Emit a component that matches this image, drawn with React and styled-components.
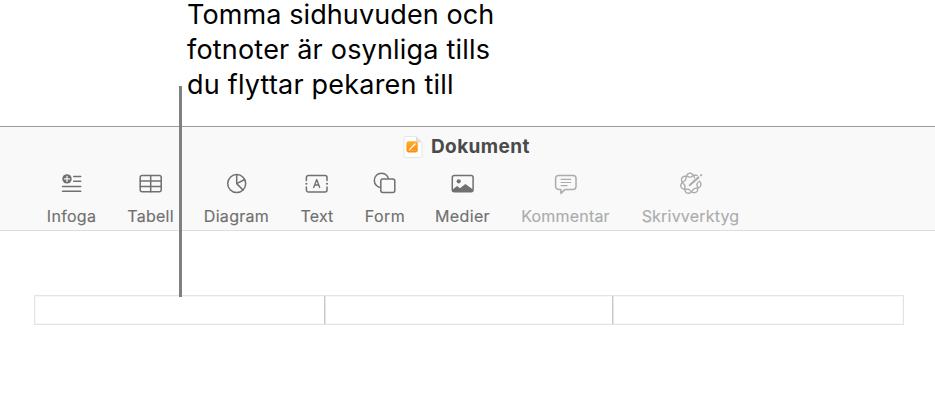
import React from "react";
import styled, { createGlobalStyle } from "styled-components";

const GlobalStyle = createGlobalStyle`
  * { box-sizing: border-box; }
  body { margin: 0; background: #fff; font-family: Inter, "Liberation Sans", sans-serif; }
`;

const Page = styled.main`
  position: relative;
  display: flow-root;
  width: 935px;
  height: 414px;
  overflow: hidden;
  background: #fff;
`;

const Callout = styled.div`
  height: 128px;
  margin: -2px 0 0;
  padding-left: 187px;
  color: #000;
  font-size: 27px;
  line-height: 34.75px;
`;

const CalloutLine = styled.span`
  display: block;
  white-space: nowrap;
  letter-spacing: ${(p) => p.$tracking}px;
`;

const Leader = styled.div`
  position: absolute;
  left: 179px;
  top: 86px;
  width: 3px;
  height: 211px;
  background: #808080;
`;

const Header = styled.header`
  height: 105px;
  background: #f9f9f9;
  border-top: 1px solid #999;
  border-bottom: 1px solid #dedede;
`;

const TitleBar = styled.div`
  display: flex;
  align-items: center;
  height: 40px;
  padding-left: 403px;
  gap: 8px;
`;

const Title = styled.h1`
  margin: 0;
  color: #4a4a4a;
  font-size: 19px;
  font-weight: 700;
  line-height: 24px;
  letter-spacing: 0.4px;
`;

const Toolbar = styled.nav`
  display: flex;
  gap: 32px;
  padding: 4px 0 0 47px;
`;

const ToolButton = styled.button`
  display: flex;
  flex-direction: column;
  align-items: center;
  gap: 9px;
  width: ${(p) => p.$width}px;
  padding: 0;
  border: 0;
  background: none;
  font-family: inherit;
  color: ${(p) => (p.disabled ? "#acacac" : "#707070")};
`;

const ToolLabel = styled.span`
  font-size: 16px;
  font-weight: 400;
  line-height: 20px;
  white-space: nowrap;
  letter-spacing: ${(p) => p.$tracking}px;
  -webkit-text-stroke: 0.15px currentColor;
`;

const Glyph = styled.svg`
  display: block;
  width: 26px;
  height: 26px;
  fill: none;
  stroke: currentColor;
  stroke-width: 1.5;
  stroke-linecap: round;
  stroke-linejoin: round;
`;

const HeaderFields = styled.section`
  display: grid;
  grid-template-columns: 290px 288px 290px;
  width: 870px;
  height: 30px;
  margin: 64px 0 0 34px;
  border: 1px solid #e2e4e5;
  box-shadow: inset 0 0 0 1px #f6f7f7;
`;

const Field = styled.div`
  border-right: ${(p) => (p.$last ? "0" : "1px solid #c6cbce")};
  box-shadow: ${(p) => (p.$last ? "none" : "1px 0 0 #e4e7e9")};
`;

const DocSvg = styled.svg`
  display: block;
  width: 20px;
  height: 24px;
`;

function DocumentIcon() {
  return (
    <DocSvg viewBox="0 0 20 24">
      <defs>
        <linearGradient id="orange" x1="0" y1="0" x2="0" y2="1">
          <stop offset="0" stopColor="#ffae2b" />
          <stop offset="1" stopColor="#fb8b0c" />
        </linearGradient>
      </defs>
      <path d="M2 1.5h11l6 6v13.5a1.5 1.5 0 0 1-1.5 1.5h-15A1.5 1.5 0 0 1 1 21V3a1.5 1.5 0 0 1 1-1.5z" fill="#fff" stroke="#e6e6e6" strokeWidth="1" />
      <path d="M13 1.5V6a1.5 1.5 0 0 0 1.5 1.5H19z" fill="#dcdcdc" />
      <rect x="3.4" y="6.2" width="11.4" height="11.2" rx="2.3" fill="url(#orange)" />
      <path d="M6.4 14.6l5.7-5.6" stroke="#fff" strokeWidth="1.3" strokeLinecap="round" />
      <path d="M6 15.4h6.5" stroke="#ffd08b" strokeWidth=".5" />
    </DocSvg>
  );
}

function rosette(cx, cy, radius, depth) {
  const pts = [];
  for (let i = 0; i <= 280; i++) {
    const t = (i / 280) * Math.PI * 4;
    const r = radius + depth * Math.cos(3.5 * (t + 0.1));
    pts.push(`${(cx + r * Math.sin(t)).toFixed(2)} ${(cy - r * Math.cos(t)).toFixed(2)}`);
  }
  return `M${pts.join("L")}`;
}

const glyphs = {
  insert: (
    <>
      <circle cx="8.3" cy="8.5" r="4.7" fill="currentColor" stroke="none" />
      <path d="M8.3 6v5M5.8 8.5h5" stroke="#f9f9f9" strokeWidth="1.2" />
      <path d="M15 6h7M15 10.9h7M3.8 16h18.2M3.8 20.8h18.2" strokeWidth="1.5" />
    </>
  ),
  table: (
    <>
      <rect x="2.5" y="5.2" width="21" height="16.2" rx="2" />
      <path d="M2.5 10.6h21M2.5 16h21M13 5.2v16.2" />
    </>
  ),
  chart: (
    <>
      <circle cx="13" cy="13.2" r="9" />
      <path d="M13 4.3v8.9l6.3 6.4M13 13.2l8-4.1" />
    </>
  ),
  text: (
    <>
      <path d="M2.7 10V7a2 2 0 0 1 2-2h16.6a2 2 0 0 1 2 2v3M2.7 16.7v2.9a2 2 0 0 0 2 2h16.6a2 2 0 0 0 2-2v-2.9" />
      <path d="M2.7 13.3h.02M23.3 13.3h.02" strokeWidth="2.1" />
      <path d="M10 17.2l3-8 3 8M11.1 14.6h3.8" strokeWidth="1.35" />
    </>
  ),
  shape: (
    <>
      <circle cx="9.8" cy="10" r="7.2" />
      <rect x="9.1" y="8.7" width="14" height="13.4" rx="2" fill="#f9f9f9" />
    </>
  ),
  media: (
    <>
      <rect x="2.6" y="5.2" width="20.8" height="16.2" rx="2" />
      <circle cx="9" cy="10.9" r="2.1" fill="currentColor" stroke="none" />
      <path d="M3 19l4.3-3.3 3 2.2 5.3-4.4 7.4 5.3v1.7q0 .9-1 .9H4q-1 0-1-1z" fill="currentColor" stroke="none" />
    </>
  ),
  comment: (
    <>
      <path d="M5.7 5h14.8a2.8 2.8 0 0 1 2.8 2.8v8.4a2.8 2.8 0 0 1-2.8 2.8h-8L8.2 23v-4H5.7a2.8 2.8 0 0 1-2.8-2.8V7.8A2.8 2.8 0 0 1 5.7 5z" />
      <path d="M8.4 9h9.6M8.4 12.1h9.6M8.4 15.2h6" strokeWidth="1.2" />
    </>
  ),
  writing: (
    <>
      <path d={rosette(13, 13, 8.3, 2)} strokeWidth="1.4" />
      <path d="M15 12.8L25 4" stroke="#f9f9f9" strokeWidth="4.6" strokeLinecap="butt" />
      <path d="M11.5 15.4l1.3-2.5 8-7 1.2 1.3-8.1 7z" fill="currentColor" stroke="none" />
      <path d="M11.9 15l8.8-7.9M23.2 5l.5-.4" strokeWidth="1.8" />
    </>
  ),
};

const tools = [
  { label: "Infoga", icon: "insert", width: 49, tracking: 0.3 },
  { label: "Tabell", icon: "table", width: 45, tracking: 0.25 },
  { label: "Diagram", icon: "chart", width: 63, tracking: 0.3 },
  { label: "Text", icon: "text", width: 34, tracking: 0.15 },
  { label: "Form", icon: "shape", width: 38, tracking: 0.5 },
  { label: "Medier", icon: "media", width: 53, tracking: 0.35 },
  { label: "Kommentar", icon: "comment", width: 89, tracking: 0.2, disabled: true },
  { label: "Skrivverktyg", icon: "writing", width: 97, tracking: 0.2, disabled: true },
];

const calloutLines = [
  { text: "Tomma sidhuvuden och", tracking: 0.1 },
  { text: "fotnoter är osynliga tills", tracking: 0.2 },
  { text: "du flyttar pekaren till", tracking: 0.2 },
];

export default function App() {
  return (
    <Page>
      <GlobalStyle />
      <Callout>
        {calloutLines.map((line) => (
          <CalloutLine key={line.text} $tracking={line.tracking}>{line.text}</CalloutLine>
        ))}
      </Callout>
      <Header>
        <TitleBar>
          <DocumentIcon />
          <Title>Dokument</Title>
        </TitleBar>
        <Toolbar>
          {tools.map((tool) => (
            <ToolButton key={tool.label} $width={tool.width} disabled={tool.disabled}>
              <Glyph viewBox="0.3 0.6 26 26">{glyphs[tool.icon]}</Glyph>
              <ToolLabel $tracking={tool.tracking}>{tool.label}</ToolLabel>
            </ToolButton>
          ))}
        </Toolbar>
      </Header>
      <HeaderFields>
        <Field />
        <Field />
        <Field $last />
      </HeaderFields>
      <Leader />
    </Page>
  );
}
